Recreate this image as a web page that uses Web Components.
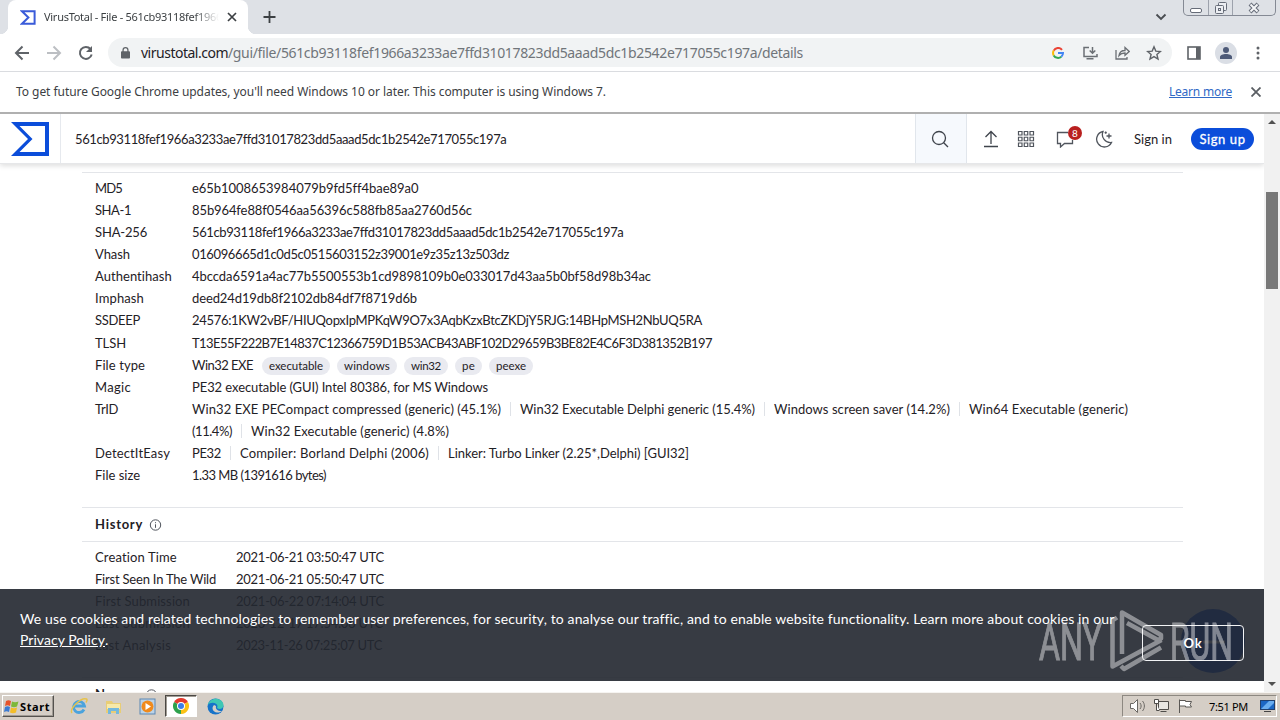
<!DOCTYPE html>
<html lang="en">
<head>
<meta charset="utf-8">
<title>VirusTotal - File</title>
<style>
  html, body { margin: 0; height: 100%; overflow: hidden; }
  body {
    width: 1280px;
    height: 720px;
    display: flex;
    flex-direction: column;
    background: #fff;
    color: #1f2126;
    font-family: "Noto Sans", sans-serif;
    font-size: 12px;
  }
  page-view { flex: 1; min-height: 0; }
</style>
</head>
<body>
  <tab-strip></tab-strip>
  <tool-bar></tool-bar>
  <info-bar></info-bar>
  <page-view></page-view>
  <task-bar></task-bar>

<script>
const shadow = (el, html) => {
  el.attachShadow({ mode: 'open' }).innerHTML = html;
};

// Text run set to a known width by letter spacing
class FitText extends HTMLElement {
  constructor() {
    super();
    shadow(this, `<style>:host { display: inline-block; white-space: nowrap; flex: none; }</style><slot></slot>`);
  }
  connectedCallback() {
    const w = parseFloat(this.getAttribute('w'));
    const n = this.textContent.length;
    if (!w || !n) return;
    this.style.letterSpacing = '0px';
    const natural = this.getBoundingClientRect().width;
    this.style.letterSpacing = ((w - natural) / n).toFixed(3) + 'px';
  }
}
customElements.define('fit-text', FitText);

class TabStrip extends HTMLElement {
  constructor() {
    super();
    shadow(this, `
      <style>
        :host { display: flex; flex: none; height: 34px; background: #dee1e6; color: #3c4043; }
        .edge { width: 8px; height: 34px; background: radial-gradient(circle at 0 26px, #dee1e6 8px, #fff 8.5px); }
        .edge.start { clip-path: inset(26px 0 0 0); }
        .edge.end { clip-path: inset(26px 0 0 0); background: radial-gradient(circle at 8px 26px, #dee1e6 8px, #fff 8.5px); }
        .tab { display: flex; align-items: center; width: 240px; box-sizing: border-box; padding: 0 9px 0 12px; background: #fff; border-radius: 8px 8px 0 0; }
        .title { width: 176px; margin: -1px 0 0 8px; overflow: hidden; font-size: 11px; -webkit-mask-image: linear-gradient(90deg, #000 150px, transparent 175px); }
        .x { margin-left: 7px; }
        .plus { margin: 9px 0 0 6px; }
        .fill { flex: 1; }
        .down { margin: 11px 16px 0 0; }
        .win { display: flex; height: 15px; width: 91px; border: 1px solid #848994; border-top: 0; border-radius: 0 0 5px 5px; margin-right: 4px; }
        .win span { display: flex; justify-content: center; width: 24px; border-right: 1px solid #9da2ac; }
        .win span:last-child { width: 42px; border: 0; }
      </style>
      <div class="edge start"></div>
      <div class="tab">
        <svg width="16" height="15" viewBox="0 0 16 15" fill="none" stroke="#3a5bd9" stroke-width="2"><path d="M2 1.2h12.6v12.6H2l6.4-6.3z"/></svg>
        <div class="title"><fit-text w="178">VirusTotal - File - 561cb93118fef1966</fit-text></div>
        <svg class="x" width="10" height="10" viewBox="0 0 10 10" stroke="#3c4043" stroke-width="1.7"><path d="M1 1l8 8M9 1L1 9"/></svg>
      </div>
      <div class="edge end"></div>
      <svg class="plus" width="15" height="15" viewBox="0 0 15 15" stroke="#3c4043" stroke-width="1.8"><path d="M7.5 2v12M1.5 8h12"/></svg>
      <div class="fill"></div>
      <svg class="down" width="12" height="12" viewBox="0 0 12 12" fill="none" stroke="#4a4d52" stroke-width="1.9"><path d="M1.5 3.5L6 8l4.5-4.5"/></svg>
      <div class="win">
        <span><svg width="14" height="15" fill="#fff" stroke="#666c78"><rect x="1.5" y="8.5" width="11" height="4" rx="1.5"/></svg></span>
        <span><svg width="14" height="15" fill="#eceef2" stroke="#666c78"><rect x="4.5" y="2.5" width="8" height="8" rx="1"/><rect x="1.5" y="5.5" width="8" height="8" rx="1"/><rect x="4.5" y="8.5" width="2" height="2"/></svg></span>
        <span><svg width="12" height="15" viewBox="0 0 12 15"><path d="M2 4l8 8M10 4l-8 8" stroke="#666c78" stroke-width="4"/><path d="M2.5 4.5l7 7M9.5 4.5l-7 7" stroke="#f4f5f7" stroke-width="2"/></svg></span>
      </div>
    `);
  }
}
customElements.define('tab-strip', TabStrip);

class ToolBar extends HTMLElement {
  constructor() {
    super();
    shadow(this, `
      <style>
        :host { display: flex; flex: none; align-items: center; height: 37px; padding: 0 6px; border-bottom: 1px solid #dadce0; background: #fff; font-size: 14px; }
        .cell { display: flex; justify-content: center; align-items: center; width: 32px; flex: none; }
        .omni { display: flex; align-items: center; flex: 1; height: 29px; margin: 0 6px; padding-right: 2px; background: #f1f3f4; border-radius: 15px; }
        .lock { margin: 0 11px 0 13px; }
        .path { color: #70757a; }
        .fill { flex: 1; }
        .face { width: 22px; height: 22px; border-radius: 50%; background: #dadee5; display: flex; justify-content: center; align-items: center; }
      </style>
      <div class="cell"><svg width="16" height="16" fill="none" stroke="#5f6368" stroke-width="2"><path d="M15 8H2.5M8.5 1.5L2 8l6.5 6.5"/></svg></div>
      <div class="cell"><svg width="16" height="16" fill="none" stroke="#bcbfc3" stroke-width="2"><path d="M1 8h12.5M7.5 1.5L14 8l-6.5 6.5"/></svg></div>
      <div class="cell"><svg width="16" height="16" fill="none" stroke="#5f6368" stroke-width="2"><path d="M13.7 9.5A6 6 0 1 1 12.5 4"/><path d="M14 1v6H8z" fill="#5f6368" stroke="none"/></svg></div>
      <div class="omni">
        <svg class="lock" width="9" height="14" viewBox="0 0 10 14"><rect y="5" width="10" height="8" rx="1" fill="#5f6368"/><path d="M2.3 6V3.7a2.7 2.7 0 0 1 5.4 0V6" fill="none" stroke="#5f6368" stroke-width="1.4"/></svg>
        <fit-text w="87">virustotal.com</fit-text>
        <fit-text class="path" w="575">/gui/file/561cb93118fef1966a3233ae7ffd31017823dd5aaad5dc1b2542e717055c197a/details</fit-text>
        <div class="fill"></div>
        <div class="cell"><svg width="12" height="12" viewBox="0 0 12 12" fill="none" stroke-width="2"><path d="M10 2.8A5 5 0 0 0 1.7 3.6" stroke="#ea4335"/><path d="M1.7 3.6a5 5 0 0 0 0 4.8" stroke="#fbbc05"/><path d="M1.7 8.4a5 5 0 0 0 7.6 1.3" stroke="#34a853"/><path d="M9.3 9.7A5 5 0 0 0 11 6H6" stroke="#4285f4"/></svg></div>
        <div class="cell"><svg width="15" height="14" fill="none" stroke="#6b6f74" stroke-width="1.5"><path d="M6 1.5H1v9h13V8M3.5 12.7h7M9.5 1v6M6.7 4.5L9.5 7.3l2.8-2.8"/></svg></div>
        <div class="cell"><svg width="15" height="14" fill="none" stroke="#6b6f74" stroke-width="1.3"><path d="M1 4v9h11v-2M4 9.5c.5-3.5 2.5-5 6-5V1.5L14.2 5.5 10 9.3V7C7 7 5.5 7.7 4 9.5z"/></svg></div>
        <div class="cell"><svg width="16" height="16" viewBox="0 0 16 16" fill="none" stroke="#5f6368" stroke-width="1.4"><path d="M8 1.8l1.8 4.3 4.6.4-3.5 3 1.1 4.5L8 11.6 4 14l1.1-4.5-3.5-3 4.6-.4z"/></svg></div>
      </div>
      <div class="cell"><svg width="14" height="14"><rect x="1" y="1" width="12" height="12" fill="none" stroke="#5f6368" stroke-width="1.6"/><path d="M9 1h4v12H9z" fill="#5f6368"/></svg></div>
      <div class="cell"><div class="face"><svg width="12" height="12" fill="#4d5a78"><circle cx="6" cy="3" r="3"/><path d="M0 12v-2c0-2 3-3 6-3s6 1 6 3v2z"/></svg></div></div>
      <div class="cell"><svg width="4" height="14" fill="#5f6368"><circle cx="2" cy="2" r="1.5"/><circle cx="2" cy="7" r="1.5"/><circle cx="2" cy="12" r="1.5"/></svg></div>
    `);
  }
}
customElements.define('tool-bar', ToolBar);

class InfoBar extends HTMLElement {
  constructor() {
    super();
    shadow(this, `
      <style>
        :host { display: flex; flex: none; align-items: center; height: 40px; padding: 0 19px 0 16px; border-bottom: 2px solid #b0b0b0; background: #fff; color: #3c4043; font-size: 12px; }
        fit-text { margin-bottom: 2px; }
        .link { color: #3069c6; text-decoration: underline; margin-left: auto; }
        svg { margin-left: 19px; }
      </style>
      <fit-text w="590">To get future Google Chrome updates, you'll need Windows 10 or later. This computer is using Windows 7.</fit-text>
      <fit-text class="link" w="63">Learn more</fit-text>
      <svg width="10" height="10" viewBox="0 0 10 10" stroke="#5a5e63" stroke-width="1.8"><path d="M.5.5l9 9M9.5.5l-9 9"/></svg>
    `);
  }
}
customElements.define('info-bar', InfoBar);

class VtHeader extends HTMLElement {
  constructor() {
    super();
    shadow(this, `
      <style>
        :host { display: flex; align-items: center; height: 50px; background: #fff; border-bottom: 1px solid #e6e7e9; box-shadow: 0 2px 5px rgba(0,0,0,.13); box-sizing: border-box; font-size: 13px; }
        .logo { display: flex; align-items: center; width: 61px; height: 100%; box-sizing: border-box; padding-left: 11px; border-right: 1px solid #e6e9ee; }
        .query { flex: 1; padding-left: 14px; }
        .find { display: flex; align-items: center; justify-content: center; width: 50px; height: 100%; background: #f6f9fd; border: solid #e1e6ec; border-width: 0 1px; }
        .find svg { margin-right: 2px; }
        .icons { display: flex; align-items: center; margin-left: 15px; }
        .icons > * { display: block; }
        .grid { margin-left: 17px; }
        .msg { position: relative; margin: 0 21px; height: 18px; }
        .badge { position: absolute; left: 12px; top: -4px; width: 14px; height: 14px; border-radius: 50%; background: #b9201f; color: #fff; font-size: 10px; line-height: 14px; text-align: center; }
        .in { margin-left: 21px; }
        .up { display: flex; align-items: center; justify-content: center; width: 63px; height: 22px; margin: 0 10px 0 19px; border-radius: 11px; background: #0b4dda; color: #fff; -webkit-text-stroke: .3px #fff; }
      </style>
      <div class="logo"><svg width="38" height="34" viewBox="0 0 38 34"><path d="M0 0h38v34H0l17-17zM8.5 4l13 13-13 13H34V4z" fill="#0b4dda" fill-rule="evenodd"/></svg></div>
      <div class="query"><fit-text w="431">561cb93118fef1966a3233ae7ffd31017823dd5aaad5dc1b2542e717055c197a</fit-text></div>
      <div class="find"><svg width="18" height="18" fill="none" stroke="#3f444c" stroke-width="1.3"><circle cx="8" cy="8" r="6.5"/><path d="M12.7 12.7l4.3 4.3"/></svg></div>
      <div class="icons">
        <svg width="18" height="18" fill="none" stroke="#3f444c" stroke-width="1.3"><path d="M9 14V1.5M3.5 7L9 1.5 14.5 7M2 16.5h14"/></svg>
        <svg class="grid" width="18" height="18" fill="none" stroke="#50555d" stroke-width="1.2"><path d="M1.5 1.5h3.5v3.5h-3.5zM7.25 1.5h3.5v3.5h-3.5zM13 1.5h3.5v3.5H13zM1.5 7.25h3.5v3.5h-3.5zM7.25 7.25h3.5v3.5h-3.5zM13 7.25h3.5v3.5H13zM1.5 13h3.5v3.5h-3.5zM7.25 13h3.5v3.5h-3.5zM13 13h3.5v3.5H13z"/></svg>
        <div class="msg">
          <svg width="18" height="18" fill="none" stroke="#50555d" stroke-width="1.3"><path d="M12 2.5H1.5v11h3V17l4-3.5h8V10"/></svg>
          <span class="badge">8</span>
        </div>
        <svg width="18" height="18" fill="none" stroke="#50555d" stroke-width="1.3"><path d="M8 1.5A7.8 7.8 0 1 0 16.5 12.5 8 8 0 0 1 8 1.5z"/><path d="M14 3.5v5M11.5 6h5M10.7 1.5v2.2M9.6 2.6h2.2"/></svg>
      </div>
      <fit-text class="in" w="38">Sign in</fit-text>
      <div class="up"><fit-text w="46">Sign up</fit-text></div>
    `);
  }
}
customElements.define('vt-header', VtHeader);

class InfoPanel extends HTMLElement {
  constructor() {
    super();
    const title = this.getAttribute('heading');
    shadow(this, `
      <style>
        :host { display: block; padding-bottom: 21px; border-top: 1px solid #e3e5e9; }
        header { display: flex; align-items: center; height: 33px; padding-left: 13px; border-bottom: 1px solid #e3e5e9; font-weight: bold; }
        header fit-text { margin-bottom: 1px; }
        svg { margin-left: 6px; }
        .rows { display: block; padding: 4px 0 0 13px; }
      </style>
      ${title ? `<header><fit-text w="${this.getAttribute('w')}">${title}</fit-text>
        <svg width="13" height="12" fill="none" stroke="#50555d"><circle cx="6.5" cy="6" r="5.2"/><path d="M6.5 5.3v3.5M6.5 3.2v1"/></svg></header>` : ''}
      <div class="rows"><slot></slot></div>
    `);
  }
}
customElements.define('info-panel', InfoPanel);

class InfoRow extends HTMLElement {
  constructor() {
    super();
    shadow(this, `
      <style>
        :host { display: flex; min-height: 22px; line-height: 22px; }
        .key { width: var(--key, 97px); flex: none; }
        .val { display: flex; flex-wrap: wrap; align-items: center; width: 960px; }
      </style>
      <div class="key"><fit-text w="${this.getAttribute('w')}">${this.getAttribute('key')}</fit-text></div>
      <div class="val"><slot></slot></div>
    `);
  }
}
customElements.define('info-row', InfoRow);

class TagChip extends HTMLElement {
  constructor() {
    super();
    shadow(this, `
      <style>
        :host { display: inline-block; height: 18px; line-height: 18px; padding: 0 7px; margin: 1px 7px 0 0; border-radius: 9px; background: #e9eaf0; font-size: 11.5px; }
      </style>
      <slot></slot>
    `);
  }
}
customElements.define('tag-chip', TagChip);

class BarSep extends HTMLElement {
  constructor() {
    super();
    shadow(this, `
      <style>:host { display: block; width: 1px; height: 14px; margin: 0 9px; background: #dfe2e7; }</style>
    `);
  }
}
customElements.define('bar-sep', BarSep);

class VtDetails extends HTMLElement {
  constructor() {
    super();
    shadow(this, `
      <style>
        :host { display: block; width: 1101px; padding: 8px 0 0 82px; font-size: 13px; }
        .tlsh { margin-top: 1px; }
        .type { margin-right: 9px; }
        .history { --key: 141px; }
      </style>
      <info-panel>
        <info-row key="MD5" w="27"><fit-text w="226">e65b1008653984079b9fd5ff4bae89a0</fit-text></info-row>
        <info-row key="SHA-1" w="36"><fit-text w="280">85b964fe88f0546aa56396c588fb85aa2760d56c</fit-text></info-row>
        <info-row key="SHA-256" w="52"><fit-text w="431">561cb93118fef1966a3233ae7ffd31017823dd5aaad5dc1b2542e717055c197a</fit-text></info-row>
        <info-row key="Vhash" w="35"><fit-text w="317">016096665d1c0d5c0515603152z39001e9z35z13z503dz</fit-text></info-row>
        <info-row key="Authentihash" w="77"><fit-text w="459">4bccda6591a4ac77b5500553b1cd9898109b0e033017d43aa5b0bf58d98b34ac</fit-text></info-row>
        <info-row key="Imphash" w="49"><fit-text w="225">deed24d19db8f2102db84df7f8719d6b</fit-text></info-row>
        <info-row key="SSDEEP" w="45"><fit-text w="510">24576:1KW2vBF/HIUQopxIpMPKqW9O7x3AqbKzxBtcZKDjY5RJG:14BHpMSH2NbUQ5RA</fit-text></info-row>
        <info-row class="tlsh" key="TLSH" w="31"><fit-text w="520">T13E55F222B7E14837C12366759D1B53ACB43ABF102D29659B3BE82E4C6F3D381352B197</fit-text></info-row>
        <info-row key="File type" w="50"><fit-text class="type" w="61">Win32 EXE</fit-text><tag-chip><fit-text w="54">executable</fit-text></tag-chip><tag-chip><fit-text w="46">windows</fit-text></tag-chip><tag-chip><fit-text w="30">win32</fit-text></tag-chip><tag-chip><fit-text w="13">pe</fit-text></tag-chip><tag-chip><fit-text w="30">peexe</fit-text></tag-chip></info-row>
        <info-row key="Magic" w="36"><fit-text w="296">PE32 executable (GUI) Intel 80386, for MS Windows</fit-text></info-row>
        <info-row key="TrID" w="23"><fit-text w="309">Win32 EXE PECompact compressed (generic) (45.1%)</fit-text><bar-sep></bar-sep><fit-text w="235">Win32 Executable Delphi generic (15.4%)</fit-text><bar-sep></bar-sep><fit-text w="176">Windows screen saver (14.2%)</fit-text><bar-sep></bar-sep><fit-text w="159">Win64 Executable (generic)</fit-text><fit-text w="40">(11.4%)</fit-text><bar-sep></bar-sep><fit-text w="198">Win32 Executable (generic) (4.8%)</fit-text></info-row>
        <info-row key="DetectItEasy" w="75"><fit-text w="29">PE32</fit-text><bar-sep></bar-sep><fit-text w="189">Compiler: Borland Delphi (2006)</fit-text><bar-sep></bar-sep><fit-text w="241">Linker: Turbo Linker (2.25*,Delphi) [GUI32]</fit-text></info-row>
        <info-row key="File size" w="45"><fit-text w="134">1.33 MB (1391616 bytes)</fit-text></info-row>
      </info-panel>
      <info-panel class="history" heading="History" w="48">
        <info-row key="Creation Time" w="82"><fit-text w="148">2021-06-21 03:50:47 UTC</fit-text></info-row>
        <info-row key="First Seen In The Wild" w="121"><fit-text w="148">2021-06-21 05:50:47 UTC</fit-text></info-row>
        <info-row key="First Submission" w="95"><fit-text w="148">2021-06-22 07:14:04 UTC</fit-text></info-row>
        <info-row key="Last Submission" w="95"><fit-text w="147">2023-12-17 17:54:06 UTC</fit-text></info-row>
        <info-row key="Last Analysis" w="76"><fit-text w="146">2023-11-26 07:25:07 UTC</fit-text></info-row>
      </info-panel>
      <info-panel heading="Names" w="44"></info-panel>
    `);
  }
}
customElements.define('vt-details', VtDetails);

class CookieBanner extends HTMLElement {
  constructor() {
    super();
    shadow(this, `
      <style>
        :host { display: block; height: 92px; box-sizing: border-box; padding: 19px 20px; background: rgba(35, 40, 48, .91); color: #fff; font-size: 14px; line-height: 21px; }
        .link { text-decoration: underline; }
        button { position: absolute; right: 20px; bottom: 20px; width: 102px; height: 36px; padding: 0; border: 1px solid #f2f3f5; border-radius: 4px; background: none; color: #fff; font: bold 13px Lato, sans-serif; }
      </style>
      <fit-text w="1094">We use cookies and related technologies to remember user preferences, for security, to analyse our traffic, and to enable website functionality. Learn more about cookies in our</fit-text><br>
      <fit-text class="link" w="85">Privacy Policy</fit-text>.
      <button><fit-text w="19">Ok</fit-text></button>
    `);
  }
}
customElements.define('cookie-banner', CookieBanner);

class WaterMark extends HTMLElement {
  constructor() {
    super();
    shadow(this, `
      <style>:host { display: block; } svg { display: block; }</style>
      <svg width="196" height="66" viewBox="1038 608 196 66" opacity=".43" font-family="Roboto, sans-serif" font-size="51" fill="#fff" stroke="#fff">
        <text x="1039" y="659.5" textLength="63" lengthAdjust="spacingAndGlyphs">ANY</text>
        <text x="1170" y="659.5" textLength="63" lengthAdjust="spacingAndGlyphs">RUN</text>
        <g fill="none" stroke-width="4.5" stroke-linejoin="round">
          <path d="M1117 617.5l-4.5 3v46l49-26.5"/>
          <path d="M1122 654v-41.5l39 22.500v3.5l-3 1.5-31-17"/>
          <path d="M1121 666l3 3 37-21.5"/>
        </g>
      </svg>
    `);
  }
}
customElements.define('water-mark', WaterMark);

class PageView extends HTMLElement {
  constructor() {
    super();
    shadow(this, `
      <style>
        :host { display: flex; position: relative; overflow: hidden; background: #fff; font-family: Lato, sans-serif; color: #1f2126; }
        main { width: 1264px; flex: none; }
        vt-header { position: relative; }
        .bar { position: relative; display: flex; flex-direction: column; align-items: center; width: 16px; background: #f1f1f1; }
        .bar svg { display: block; margin-top: 6px; }
        .thumb { width: 12px; height: 97px; margin: 68px 0 auto; background: #787878; }
        .bar svg:last-child { margin: 0 0 6px; }
        .chat { position: absolute; left: 1181px; top: 495px; width: 64px; height: 64px; border-radius: 50%; background: #0b4dda; }
        cookie-banner { position: absolute; left: 0; top: 475px; width: 1264px; }
        water-mark { position: absolute; left: 1038px; top: 494px; }
      </style>
      <main>
        <vt-header></vt-header>
        <vt-details></vt-details>
      </main>
      <div class="bar">
        <svg width="8" height="4" fill="#505050"><path d="M0 4l4-4 4 4z"/></svg>
        <div class="thumb"></div>
        <svg width="8" height="4" fill="#505050"><path d="M0 0l4 4 4-4z"/></svg>
      </div>
      <div class="chat"><svg width="64" height="64" stroke="#fff" stroke-width="3"><path d="M22 33h22"/></svg></div>
      <cookie-banner></cookie-banner>
      <water-mark></water-mark>
    `);
  }
}
customElements.define('page-view', PageView);

class TaskBar extends HTMLElement {
  constructor() {
    super();
    shadow(this, `
      <style>
        :host { display: flex; flex: none; align-items: center; height: 26px; padding: 0 3px 1px 2px; border-top: 1px solid #f6f4f1; background: #d5cec6; color: #000; font-size: 11px; }
        .start { display: flex; align-items: center; width: 50px; height: 20px; border: 1px solid; border-color: #fff #55524e #55524e #fff; box-shadow: inset -1px -1px #a09b94; font-weight: bold; }
        .start svg { margin: 0 1px; }
        .app { display: flex; justify-content: center; align-items: center; width: 30px; height: 20px; border: 1px solid transparent; margin-left: 2px; }
        .app.first { margin-left: 9px; }
        .app.on { background: #fff; border-color: #4b4844 #fff #fff #4b4844; box-shadow: inset 1px 1px #a09b94; }
        .tray { display: flex; align-items: center; width: 153px; height: 20px; margin-left: auto; border: 1px solid; border-color: #8d8881 #fff #fff #8d8881; }
        .tray svg { margin-left: 6px; }
        .time { margin-left: 14px; }
        .tray svg.desk { margin-left: 12px; }
      </style>
      <div class="start">
        <svg width="15" height="15" viewBox="0 0 15 15"><path d="M2 2c2-1 3-1 5 0L6 7C4 6 3 6 1 7z" fill="#e6532a"/><path d="M8 2.5c2 1 4 1 6.5 0L13 7.5c-2 1-4 1-6 0z" fill="#7db83a"/><path d="M1 8c2-1 3-1 5 0l-1 5c-2-1-3-1-5 0z" fill="#3b7ad2"/><path d="M7 8.5c2 1 4 1 6 0l-1 5c-2 1-4 1-6 0z" fill="#f3bd28"/></svg>
        <fit-text w="30">Start</fit-text>
      </div>
      <div class="app first"><svg width="18" height="18" viewBox="0 0 18 18" fill="none"><path d="M14 12.5A5.5 5.5 0 1 1 14.5 9H5" stroke="#4ba3dd" stroke-width="2.8"/><path d="M2 16C-1 12 11 0 16.5 2c1 .5.5 2-.5 3.5" stroke="#e7c34a" stroke-width="1.4"/></svg></div>
      <div class="app"><svg width="17" height="17" viewBox="0 0 17 17"><path d="M1 3h6l1 2h8v10H1z" fill="#e8cd76"/><path d="M2 6h13v5H2z" fill="#f7e9a9"/><path d="M3 16v-6h11v6h-3v-3H6v3z" fill="#74b8dd"/></svg></div>
      <div class="app"><svg width="17" height="17" viewBox="0 0 17 17"><rect x="1" y="1" width="15" height="15" fill="#bcd3e7" stroke="#5d87b3"/><circle cx="8.5" cy="8.5" r="6" fill="#f08a1c"/><path d="M6.5 5l5.5 3.5L6.5 12z" fill="#fff"/></svg></div>
      <div class="app on"><svg width="16" height="16" viewBox="0 0 16 16"><path d="M8 8L1.07 4A8 8 0 0 1 14.93 4z" fill="#e33b2e"/><path d="M8 8l6.93-4A8 8 0 0 1 8 16z" fill="#fbc116"/><path d="M8 8v8A8 8 0 0 1 1.07 4z" fill="#2da14c"/><circle cx="8" cy="8" r="4" fill="#fff"/><circle cx="8" cy="8" r="3" fill="#3b7de8"/></svg></div>
      <div class="app"><svg width="17" height="17" viewBox="0 0 17 17"><circle cx="8.5" cy="8.5" r="8" fill="#1673c9"/><path d="M.7 7C2 1 11-2 15.5 4c2.5 4 0 7-3 7-2 0-3-1-2-2.5C11 5 4 3 .7 7z" fill="#3fc7b4"/><path d="M7 7c-3 3-1 7 3 7.5 2 .2 4-.5 5-1.5-2.500.5-7-1-6-5z" fill="#d5cec6"/></svg></div>
      <div class="tray">
        <svg width="18" height="16" fill="#fff" stroke="#6a6763"><path d="M1.5 5.5h3l4-4v13l-4-4h-3z"/><path d="M11 5c1.5 2 1.5 4 0 6M13.5 3c2.5 3 2.5 7 0 10" fill="none"/></svg>
        <svg width="18" height="16" fill="#e8e6e2" stroke="#4f4d4a"><path d="M5.5 3.5h10v8h-10zM7.5 13.5h6"/><path d="M1.5 1.5h4v4h-4zM3.5 5.5v7h3" fill="#fff"/></svg>
        <svg width="18" height="16" fill="#fff" stroke="#5b5855"><path d="M2.5 15V1.5M2.5 2.5h6v1h6l-1.5 3 1.5 2.5h-6V8h-6z"/></svg>
        <fit-text class="time" w="39">7:51 PM</fit-text>
        <svg class="desk" width="15" height="14"><rect x=".5" y="1.5" width="14" height="9" fill="#1b66c4" stroke="#20406f"/><path d="M1 10l8-8h5v2L8 10z" fill="#69adf0"/><path d="M4 12.5h7" stroke="#444"/></svg>
      </div>
    `);
  }
}
customElements.define('task-bar', TaskBar);
</script>
</body>
</html>
